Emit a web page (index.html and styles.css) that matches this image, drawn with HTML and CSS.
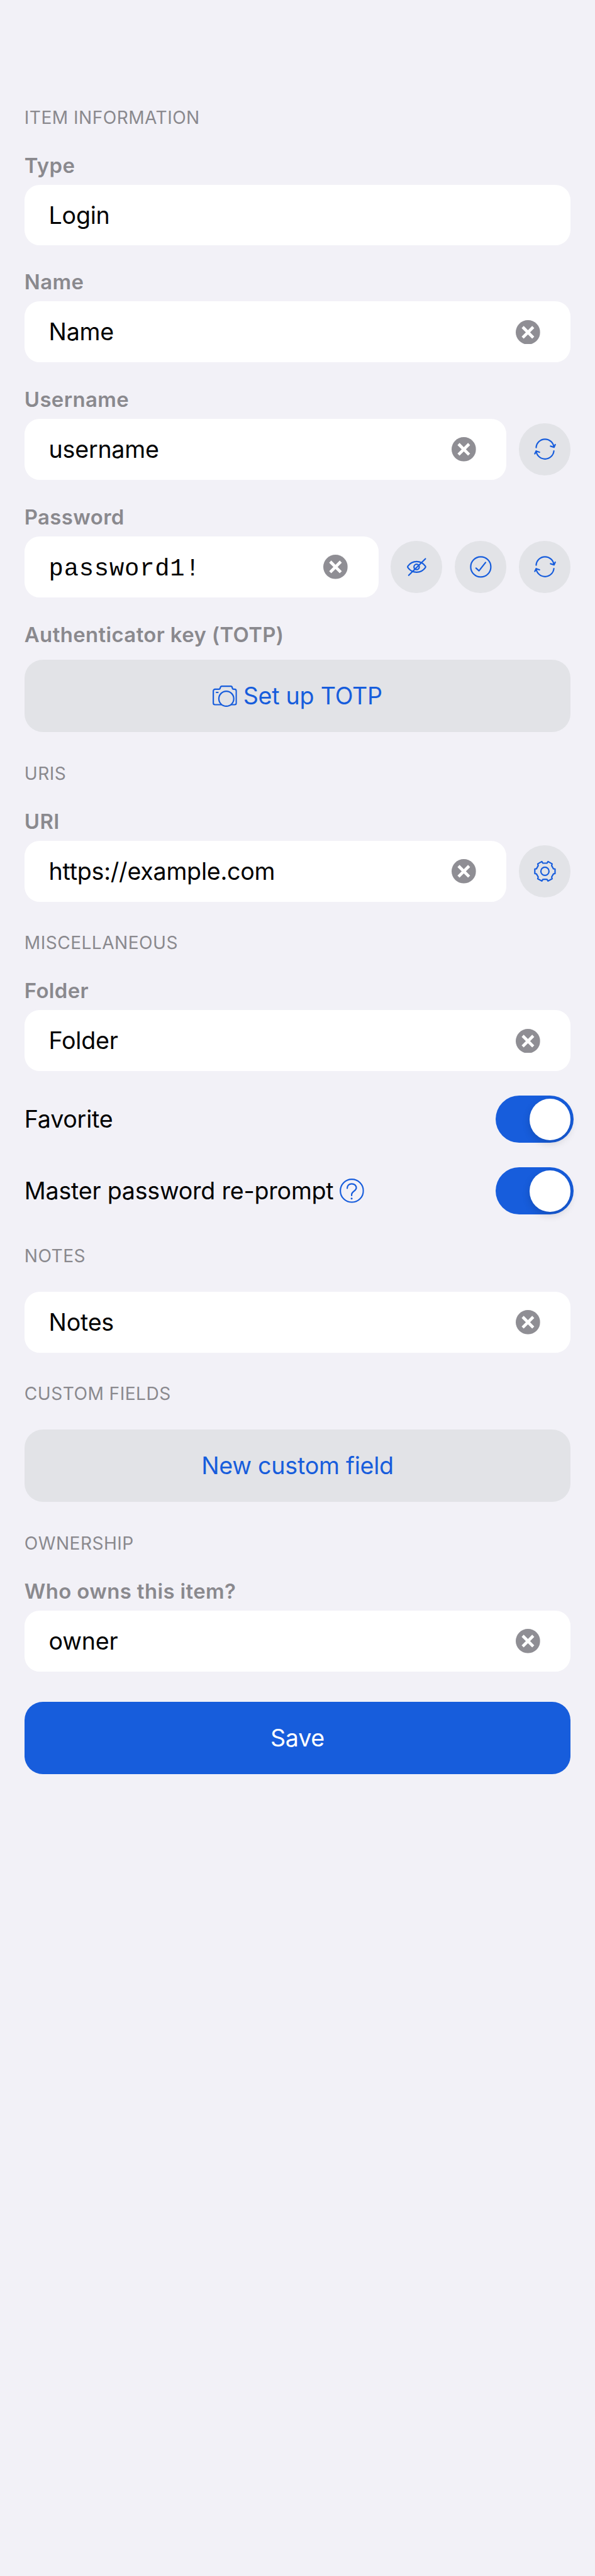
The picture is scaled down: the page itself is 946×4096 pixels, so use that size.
FILE: index.html
```html
<!DOCTYPE html>
<html lang="en">
<head>
<meta charset="utf-8">
<title>Edit item</title>
<link rel="stylesheet" href="styles.css">
</head>
<body>
<svg class="sprite" aria-hidden="true">
  <symbol id="clear" viewBox="-24 -24 48 48">
    <circle r="24" fill="#8f8e94"/>
    <path d="M-10.4-10.4 10.4 10.4M10.4-10.4-10.4 10.4" stroke="#fff" stroke-width="5.8" fill="none"/>
  </symbol>
  <symbol id="refresh" viewBox="-24 -24 48 48">
    <path d="M-17.3-3.4A17.5 17.5 0 0 1 17.6-4M11-6.2 17.9-3.9 20.3-9.3M17.6 3.2A17.5 17.5 0 0 1-17.2 3.6"/>
    <path d="M-19.9 8.8-17.3 3.6-10.8 5.8"/>
  </symbol>
  <symbol id="eye-slash" viewBox="-24 -24 48 48">
    <path d="M-17.3-1.3C-13-7.5-7-10.6 0-10.6S13-7.5 17.3-1.3Q18.1 0 17.3 1.3C13 7.5 7 10.6 0 10.6S-13 7.5-17.3 1.3Q-18.1 0-17.3-1.3Z"/>
    <circle r="5.2"/>
    <path d="M17.3-16-15.6 16.6"/>
  </symbol>
  <symbol id="check" viewBox="-24 -24 48 48">
    <circle r="19.8"/>
    <path d="M-9.3 2.4-3.5 7.7 9.4-8.6"/>
  </symbol>
  <symbol id="gear" viewBox="-24 -24 48 48">
    <circle r="8"/>
    <path d="M4.2-16.2 6.1-19.2 14.2-14.6 13.2-11.2 16.7-4.9 19.9-4.5V4.5L16.7 5.2 13.2 11.2 14.2 14.6 6.1 19.2 4.2 16Q0 15.5-4.2 16L-6.1 19.2-14.2 14.6-13.2 11.2-16.7 5.2-19.9 4.5V-4.5L-16.7-4.9-13.2-11.2-14.2-14.6-6.1-19.2-4.2-16.2Q0-15.7 4.2-16.2Z"/>
  </symbol>
  <symbol id="help" viewBox="-24 -24 48 48">
    <circle r="22.6"/>
    <path d="M-9.1-4.8C-9.3-10.2-5.4-13.7-.2-13.7S8.8-10.3 8.8-5.6C8.8.4-.4 1.6-.4 7.2V9.4"/>
    <circle cx="-.4" cy="15.3" r="1.9" class="dot"/>
  </symbol>
  <symbol id="camera" viewBox="0 0 48 42">
    <path d="M17.2 37.7H4.8A3.4 3.4 0 0 1 1.4 34.3V10.7A3.4 3.4 0 0 1 4.8 7.3H12.4Q14.7 7.3 15 4.9 15.4 1.4 18.2 1.4H35.6Q38.6 1.4 38.8 4.9 39 7.3 41.4 7.3H43.2A3.4 3.4 0 0 1 46.6 10.7V34.3A3.4 3.4 0 0 1 43.2 37.7H36.4"/>
    <circle cx="27" cy="26" r="14.7"/>
    <path d="M7.4 13.6H10.6"/>
  </symbol>
</svg>

<main class="form">
  <section class="section">
    <h2 class="heading">ITEM INFORMATION</h2>
    <div class="field">
      <span class="label">Type</span>
      <div class="row"><div class="input input-menu">Login</div></div>
    </div>
    <div class="field">
      <span class="label">Name</span>
      <div class="row"><div class="input">Name<svg class="clear"><use href="#clear"/></svg></div></div>
    </div>
    <div class="field">
      <span class="label">Username</span>
      <div class="row">
        <div class="input">username<svg class="clear"><use href="#clear"/></svg></div>
        <div class="round"><svg class="icon"><use href="#refresh"/></svg></div>
      </div>
    </div>
    <div class="field">
      <span class="label">Password</span>
      <div class="row">
        <div class="input"><span class="mono">password1!</span><svg class="clear"><use href="#clear"/></svg></div>
        <div class="round"><svg class="icon"><use href="#eye-slash"/></svg></div>
        <div class="round"><svg class="icon"><use href="#check"/></svg></div>
        <div class="round"><svg class="icon"><use href="#refresh"/></svg></div>
      </div>
    </div>
    <div class="field field-action">
      <span class="label">Authenticator key (TOTP)</span>
      <div class="button"><svg class="icon camera"><use href="#camera"/></svg>Set up TOTP</div>
    </div>
  </section>

  <section class="section">
    <h2 class="heading">URIS</h2>
    <div class="field">
      <span class="label">URI</span>
      <div class="row">
        <div class="input">https://example.com<svg class="clear"><use href="#clear"/></svg></div>
        <div class="round"><svg class="icon"><use href="#gear"/></svg></div>
      </div>
    </div>
  </section>

  <section class="section">
    <h2 class="heading">MISCELLANEOUS</h2>
    <div class="field">
      <span class="label">Folder</span>
      <div class="row"><div class="input">Folder<svg class="clear"><use href="#clear"/></svg></div></div>
    </div>
    <div class="setting"><span>Favorite</span><div class="toggle"><div class="knob"></div></div></div>
    <div class="setting"><span>Master password re-prompt</span><svg class="icon"><use href="#help"/></svg><div class="toggle"><div class="knob"></div></div></div>
  </section>

  <section class="section">
    <h2 class="heading">NOTES</h2>
    <div class="row"><div class="input">Notes<svg class="clear"><use href="#clear"/></svg></div></div>
  </section>

  <section class="section">
    <h2 class="heading">CUSTOM FIELDS</h2>
    <div class="button">New custom field</div>
  </section>

  <section class="section">
    <h2 class="heading">OWNERSHIP</h2>
    <div class="field">
      <span class="label">Who owns this item?</span>
      <div class="row"><div class="input">owner<svg class="clear"><use href="#clear"/></svg></div></div>
    </div>
  </section>

  <div class="button button-primary">Save</div>
</main>
</body>
</html>
```
FILE: styles.css
```css
/* The page is 117rem wide */
html {
  font-size: 8.0855px;
}

* {
  box-sizing: border-box;
}

body {
  margin: 0;
  min-height: 4096px;
  background: #f2f1f7;
  color: #000;
  font-family: Inter, "Liberation Sans", sans-serif;
  font-size: 4.65rem;
  letter-spacing: -0.028rem;
}

.sprite {
  display: none;
}

.form {
  display: flex;
  flex-direction: column;
  padding: 20.8rem 4.8rem 0;
}

.section {
  display: flex;
  flex-direction: column;
  margin-bottom: 5.75rem;
}

.heading {
  margin: 0 0 4.6rem;
  color: #8a898e;
  font-size: 3.48rem;
  font-weight: 400;
  line-height: 4.8rem;
  letter-spacing: 0.056rem;
}

.field {
  display: flex;
  flex-direction: column;
  gap: 1.4rem;
}

.field + .field {
  margin-top: 4.9rem;
}

.field-action {
  gap: 2.6rem;
}

.label {
  color: #8a898e;
  font-size: 4.07rem;
  font-weight: 600;
  line-height: 4.8rem;
  letter-spacing: 0.047rem;
}

.row {
  display: flex;
  align-items: center;
  gap: 2.4rem;
}

.input {
  display: flex;
  flex: 1;
  align-items: center;
  justify-content: space-between;
  height: 12rem;
  padding: 0 6rem 0 4.8rem;
  border-radius: 3rem;
  background: #fff;
}

.input-menu {
  height: 11.8rem;
}

.mono {
  padding-top: 0.9rem;
  font-family: "Liberation Mono", monospace;
  font-size: 4.8rem;
  letter-spacing: 0.1rem;
}

.clear,
.icon {
  display: block;
  flex: none;
  width: 4.8rem;
  height: 4.8rem;
}

.icon {
  fill: none;
  stroke: #175ddc;
  stroke-width: 2.7;
  stroke-linecap: round;
  stroke-linejoin: round;
}

.dot {
  fill: #175ddc;
  stroke: none;
}

.camera {
  height: 4.2rem;
}

.round {
  display: flex;
  flex: none;
  align-items: center;
  justify-content: center;
  width: 10.2rem;
  height: 10.2rem;
  border-radius: 50%;
  background: #e2e3e7;
}

.button {
  display: flex;
  align-items: center;
  justify-content: center;
  gap: 1.2rem;
  height: 14.2rem;
  border-radius: 3.6rem;
  background: #e2e3e7;
  color: #175ddc;
}

.button-primary {
  margin-top: 0.25rem;
  background: #175ddc;
  color: #fff;
}

.setting {
  display: flex;
  align-items: center;
  gap: 1.2rem;
  height: 9.3rem;
  margin: 4.8rem -0.6rem 0 0;
}

.toggle {
  display: flex;
  justify-content: flex-end;
  width: 15.3rem;
  height: 9.3rem;
  margin-left: auto;
  padding: 0.6rem;
  border-radius: 4.65rem;
  background: #175ddc;
}

.knob {
  width: 8.1rem;
  height: 8.1rem;
  border-radius: 50%;
  background: #fff;
  box-shadow: 0 0.6rem 1.6rem rgba(0, 0, 0, 0.15);
}
```
